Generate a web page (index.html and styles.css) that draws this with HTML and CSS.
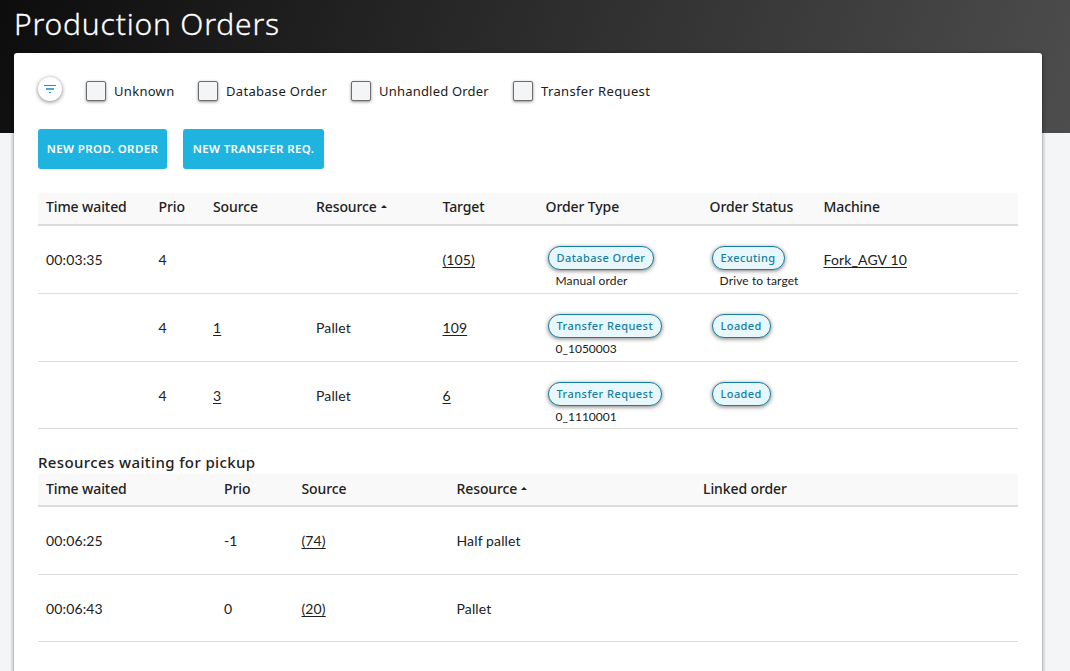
FILE: index.html
```
<!DOCTYPE html>
<html lang="en">
<head>
<meta charset="utf-8">
<title>Production Orders</title>
<link rel="stylesheet" href="styles.css">
</head>
<body>
<div class="page">
  <h1 class="title">Production Orders</h1>
  <main class="card">
    <div class="filters">
      <button class="filter-btn" aria-label="Filter">
        <svg width="12" height="10" viewBox="0 0 12 10"><path d="M0 1h12v1H0z" fill="#149ac0"/><path d="M2 4h8v2H2z" fill="#3fadcb"/><path d="M5 8h2v1H5z" fill="#149ac0"/></svg>
      </button>
      <label class="check f1"><span class="box"></span><span class="txt">Unknown</span></label>
      <label class="check f2"><span class="box"></span><span class="txt">Database Order</span></label>
      <label class="check f3"><span class="box"></span><span class="txt">Unhandled Order</span></label>
      <label class="check f4"><span class="box"></span><span class="txt">Transfer Request</span></label>
    </div>
    <div class="actions">
      <button class="action prod">NEW PROD. ORDER</button>
      <button class="action transfer">NEW TRANSFER REQ.</button>
    </div>
    <section class="orders">
      <div class="row head"><span>Time waited</span><span>Prio</span><span>Source</span><span>Resource<i class="sort"></i></span><span>Target</span><span>Order Type</span><span>Order Status</span><span>Machine</span></div>
      <div class="row"><span>00:03:35</span><span>4</span><span></span><span></span><span><a>(105)</a></span>
        <div class="state"><b class="pill">Database Order</b><small>Manual order</small></div>
        <div class="state"><b class="pill">Executing</b><small>Drive to target</small></div>
        <span><a>Fork_AGV 10</a></span></div>
      <div class="row"><span></span><span>4</span><span><a>1</a></span><span>Pallet</span><span><a>109</a></span>
        <div class="state"><b class="pill request">Transfer Request</b><small class="id">0_1050003</small></div>
        <div class="state"><b class="pill">Loaded</b></div></div>
      <div class="row last"><span></span><span>4</span><span><a>3</a></span><span>Pallet</span><span><a>6</a></span>
        <div class="state"><b class="pill request">Transfer Request</b><small class="id">0_1110001</small></div>
        <div class="state"><b class="pill">Loaded</b></div></div>
    </section>
    <h2 class="subtitle">Resources waiting for pickup</h2>
    <section class="pickup">
      <div class="row head"><span>Time waited</span><span>Prio</span><span>Source</span><span>Resource<i class="sort"></i></span><span>Linked order</span></div>
      <div class="row"><span>00:06:25</span><span>-1</span><span><a>(74)</a></span><span>Half pallet</span></div>
      <div class="row last"><span>00:06:43</span><span>0</span><span><a>(20)</a></span><span>Pallet</span></div>
    </section>
  </main>
</div>
</body>
</html>
```
FILE: styles.css
```
* { box-sizing: border-box; }
body {
  margin: 0;
  height: 671px;
  overflow: hidden;
  color: #212121;
  font-family: Lato, sans-serif;
  font-size: 14px;
  background: linear-gradient(110deg, #0d0d0d, #4d4d4d) 0 0 / 100% 133px no-repeat #f4f5f7;
}
.page { padding: 0 28px 0 14px; }
.title {
  margin: 0;
  height: 53px;
  color: #fff;
  font: 300 30px/48px "Noto Sans", sans-serif;
  letter-spacing: 0.82px;
  -webkit-text-stroke: .3px #fff;
  white-space: nowrap;
}
.card {
  height: 640px;
  padding: 24px;
  background: #fff;
  border-radius: 3px;
  box-shadow: 0 1px 4px rgba(0, 0, 0, .5);
}
.filters { display: flex; height: 28px; align-items: center; }
.filter-btn {
  display: flex;
  align-items: center;
  justify-content: center;
  width: 24px;
  height: 24px;
  margin: 0 24px 4px 0;
  padding: 0;
  border: 0;
  border-radius: 50%;
  background: #fff;
  box-shadow: 0 1px 4px rgba(0, 0, 0, .5);
}
.check { display: flex; align-items: center; gap: 8px; }
.check .txt { font: 13px/20px "Noto Sans", sans-serif; letter-spacing: .3px; white-space: nowrap; }
.f1 { width: 112px; }
.f2 { width: 153px; }
.f3 { width: 162px; }
.check.f3 .txt { letter-spacing: .2px; }
.check.f4 .txt { letter-spacing: .36px; }
.box {
  flex: none;
  width: 20px;
  height: 20px;
  border: 1px solid #6d6d6d;
  border-radius: 2px;
  background: #f4f5f7;
  box-shadow: 0 1px 3px rgba(0, 0, 0, .45);
}
.actions { display: flex; gap: 16px; margin: 24px 0; }
.action {
  height: 40px;
  padding: 0;
  border: 0;
  border-radius: 3px;
  background: #1fb3e0;
  color: #fff;
  font: 600 11.5px/40px "Noto Sans", sans-serif;
  letter-spacing: .38px;
  white-space: nowrap;
}
.prod { width: 129px; }
.transfer { width: 141px; }
.row { display: grid; height: 68px; border-bottom: 1px solid #dcdcdc; }
.row.last { height: 67px; }
.orders .row { grid-template-columns: 112.5px 54.5px 103px 126.5px 103px 164px 114px 1fr; }
.pickup .row { grid-template-columns: 178px 77.5px 155px 246.5px 1fr; }
.row > span { padding-left: 8px; line-height: 68px; letter-spacing: .13px; white-space: nowrap; }
.row.head { height: 33px; background: #f9f9f9; border-bottom: 2px solid #dcdcdc; }
.row.head > span { font: 500 14px/28px "Noto Sans", sans-serif; letter-spacing: -.1px; }
.pickup .row.head > span { line-height: 30px; }
.row a { text-decoration: underline; text-underline-offset: 2px; }
.sort {
  display: inline-block;
  margin: 0 0 4px 4px;
  border: 3px solid transparent;
  border-top: 0;
  border-bottom-color: #212121;
}
.state { display: flex; flex-direction: column; align-items: flex-start; padding: 20px 0 0 10px; }
.pill {
  height: 24px;
  padding: 0 8px;
  border: 1px solid #17809c;
  border-radius: 12px;
  background: #e7f7fc;
  color: #17809c;
  box-shadow: 0 1px 4px rgba(0, 0, 0, .5);
  font: 500 11px/22px "Noto Sans", sans-serif;
  letter-spacing: .4px;
  white-space: nowrap;
}
.pill.request { letter-spacing: .46px; }
.state small { margin: 3px 0 0 8px; font-size: 12px; line-height: 16px; letter-spacing: .13px; white-space: nowrap; }
.state small.id { letter-spacing: 0; }
.subtitle { margin: 24px 0 0; font: 500 15px/18px "Noto Sans", sans-serif; letter-spacing: .38px; height: 21px; }
```
